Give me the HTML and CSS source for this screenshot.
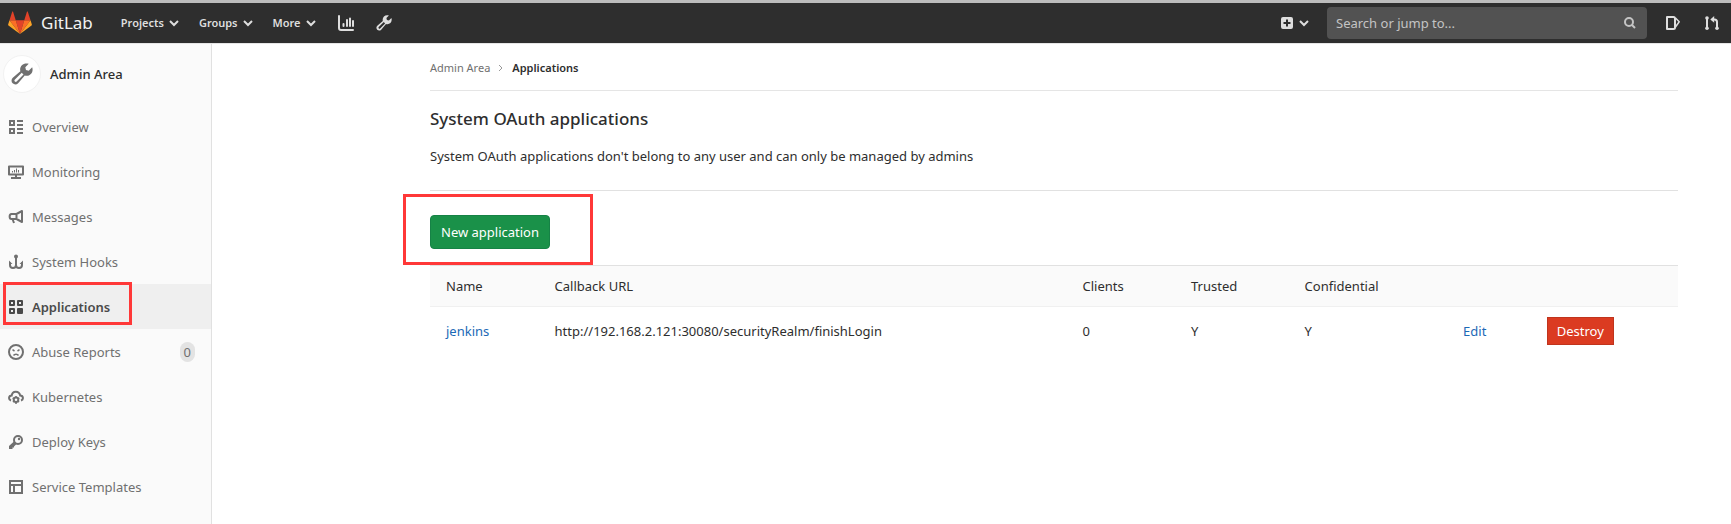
FILE: index.html
```html
<!DOCTYPE html>
<html lang="en">
<head>
<meta charset="utf-8">
<title>Applications · Admin Area · GitLab</title>
<link rel="stylesheet" href="styles.css">
</head>
<body>
<header class="navbar">
  <a class="brand" href="#">
    <svg class="logo" viewBox="0 0 36 36" aria-hidden="true">
      <path fill="#e24329" d="M18 34.4 24.4 14H11.6z"/>
      <path fill="#fc6d26" d="M18 34.4 11.6 14H2.2zM18 34.4 24.4 14h9.4z"/>
      <path fill="#fca326" d="M2.2 14 .2 20.3c-.2.6 0 1.2.5 1.5L18 34.4zM33.8 14l2 6.3c.2.6 0 1.2-.5 1.5L18 34.4z"/>
      <path fill="#e24329" d="M2.2 14h9.4L7.6 1.2c-.2-.6-1.1-.6-1.3 0zM33.8 14h-9.4l4-12.8c.2-.6 1.1-.6 1.3 0z"/>
    </svg>
    <span class="brand-name">GitLab</span>
  </a>
  <nav class="nav-left" aria-label="Primary">
    <button class="nav-btn" type="button">Projects <svg class="chev" viewBox="0 0 10 10"><path d="M1 3l4 4 4-4"/></svg></button>
    <button class="nav-btn" type="button">Groups <svg class="chev" viewBox="0 0 10 10"><path d="M1 3l4 4 4-4"/></svg></button>
    <button class="nav-btn" type="button">More <svg class="chev" viewBox="0 0 10 10"><path d="M1 3l4 4 4-4"/></svg></button>
    <a class="nav-icon" href="#" aria-label="Instance statistics"><svg class="icon" viewBox="0 0 16 16"><path fill="none" stroke="currentColor" stroke-width="2" stroke-linecap="round" d="M1 1v12c0 1.3.7 2 2 2h12"/><path fill="none" stroke="currentColor" stroke-width="2" stroke-linecap="round" d="M5.500 9v2M9 5v6M12 3.500V11M15 6v5"/></svg></a>
    <a class="nav-icon" href="#" aria-label="Admin Area"><svg class="icon" viewBox="0 0 16 16"><use href="#wrench"/></svg></a>
  </nav>
  <div class="nav-right">
    <button class="nav-btn new-btn" type="button" aria-label="New"><svg class="plus" viewBox="0 0 12 12"><path fill="currentColor" fill-rule="evenodd" d="M2 0h8a2 2 0 0 1 2 2v8a2 2 0 0 1-2 2H2a2 2 0 0 1-2-2V2a2 2 0 0 1 2-2zm3 2.500V5H2.500v2H5v2.500h2V7h2.500V5H7V2.500z"/></svg><svg class="chev" viewBox="0 0 10 10"><path d="M1 3l4 4 4-4"/></svg></button>
    <form class="search">
      <input type="text" placeholder="Search or jump to..." aria-label="Search or jump to">
      <svg class="search-icon" viewBox="0 0 12 12"><circle cx="5" cy="5" r="4" /><path d="M8 8l3 3"/></svg>
    </form>
    <a class="nav-icon" href="#" aria-label="Issues"><svg class="icon" viewBox="0 0 16 16"><path fill="none" stroke="currentColor" stroke-width="2" stroke-linejoin="round" d="M2 2h6.500c1 0 1.500.5 1.500 1.500v9c0 1-.5 1.500-1.500 1.500H2z"/><path fill="none" stroke="currentColor" stroke-width="1.500" stroke-linejoin="round" d="M10.500 3l3.700 3.800-3.700 5.200"/></svg></a>
    <a class="nav-icon" href="#" aria-label="Merge requests"><svg class="icon" viewBox="0 0 16 16"><path fill="none" stroke="currentColor" stroke-width="2" d="M3 3v10M9 4.500h1.500C12.300 4.500 13 5.500 13 7v6"/><path fill="currentColor" d="M10.200 1v6.800L6.300 4.400z"/><circle cx="3" cy="3" r="1.800" fill="currentColor"/><circle cx="3" cy="13.200" r="1.800" fill="currentColor"/><circle cx="13" cy="13.200" r="1.800" fill="currentColor"/></svg></a>
  </div>
</header>
<div class="layout">
  <aside class="sidebar">
    <a class="context" href="#">
      <span class="avatar"><svg class="wrench-lg" viewBox="0 0 16 16"><path id="wrench" fill="currentColor" fill-rule="evenodd" d="M12.900.6 10.400 3.100l.5 2 2 .5 2.500-2.500c1.300 3.800-1.800 7-5.400 6L5.200 14.700c-1.100 1.200-2.900 1.200-4 .1-1.100-1.100-1.100-2.900.1-4L6.800 6C5.900 2.200 9.200-.6 12.900.6zM7.800 7.100l-5.100 5a1 1 0 0 0 1.400 1.400l5-5.100z"/></svg></span>
      <span class="context-title">Admin Area</span>
    </a>
    <ul class="menu">
      <li><a href="#"><svg class="icon" viewBox="0 0 16 16"><path fill="none" stroke="currentColor" stroke-width="2" d="M2 2h4v4H2zM2 10h4v4H2zM9 2h6M9 6h6M9 10h6M9 14h6"/></svg>Overview</a></li>
      <li><a href="#"><svg class="icon" viewBox="0 0 16 16"><path fill="none" stroke="currentColor" stroke-width="2" stroke-linejoin="round" d="M1 2.500h14v8H1zM8 11v3M3 14h10"/><path fill="none" stroke="currentColor" d="M4.500 7v1.500M6.500 6v2.500M8.500 4.500v4M10.500 6v2.500"/></svg>Monitoring</a></li>
      <li><a href="#"><svg class="icon" viewBox="0 0 16 16"><path fill="none" stroke="currentColor" stroke-width="2" stroke-linejoin="round" d="M8.500 5 14 2v11L8.500 10H3.500C1 10 1 5 3.500 5zM8.500 5v5M4.500 10l1.500 4"/></svg>Messages</a></li>
      <li><a href="#"><svg class="icon" viewBox="0 0 16 16"><circle cx="8" cy="2.500" r="2" fill="currentColor"/><path fill="none" stroke="currentColor" stroke-width="2" d="M8 3v11M2 8.500V11c0 2 1.200 3 3 3s3-1 3-3M8 11c0 2 1.200 3 3 3s3-1 3-3V8.500"/><path fill="currentColor" d="M1 10V6.500L4.500 10zM11.500 10 15 6.500V10z"/></svg>System Hooks</a></li>
      <li class="active"><a href="#" aria-current="page"><svg class="icon" viewBox="0 0 16 16"><path fill="none" stroke="currentColor" stroke-width="2" stroke-linejoin="round" d="M2 2h4v4H2zM10 2h4v4h-4zM2 10h4v4H2z"/><path fill="currentColor" stroke="currentColor" stroke-width="2" stroke-linejoin="round" d="M10 10h4v4h-4z"/></svg>Applications</a></li>
      <li><a href="#"><svg class="icon" viewBox="0 0 16 16"><circle cx="8" cy="8" r="7" fill="none" stroke="currentColor" stroke-width="2"/><path fill="none" stroke="currentColor" stroke-width="1.500" d="M5.500 11.500c1-1.700 4-1.700 5 0M4.500 5.700l2 1.300M11.500 5.700l-2 1.300"/></svg>Abuse Reports<span class="badge">0</span></a></li>
      <li><a href="#"><svg class="icon" viewBox="0 0 16 16"><path fill="none" stroke="currentColor" stroke-width="2" d="M3 11.500C.2 10.500.500 6.700 3.700 6.500 4.300 1.700 11 1.300 12.200 6.500c3.300.2 3.600 4 .8 5"/><circle cx="8" cy="10.800" r="2.300" fill="none" stroke="currentColor" stroke-width="2"/><path stroke="currentColor" stroke-width="1.500" d="M8 7v1.500M8 13v2M4.700 9l1.500.8M11.300 9l-1.500.8M4.900 13l1.400-1M11.100 13l-1.400-1"/></svg>Kubernetes</a></li>
      <li><a href="#"><svg class="icon" viewBox="0 0 16 16"><circle cx="10" cy="6" r="4" fill="none" stroke="currentColor" stroke-width="2"/><circle cx="11" cy="5" r="1.200" fill="currentColor"/><path fill="currentColor" d="M6.200 7.200 8.800 9.800 6 12.500v1H4.500V15H1v-3z"/></svg>Deploy Keys</a></li>
      <li><a href="#"><svg class="icon" viewBox="0 0 16 16"><path fill="none" stroke="currentColor" stroke-width="2" d="M2 2h12v12H2zM2 6h12M6 6v8"/></svg>Service Templates</a></li>
      <li><a href="#" aria-label="Labels"><svg class="icon" viewBox="0 0 16 16"><path fill="none" stroke="currentColor" stroke-width="2" stroke-linejoin="round" d="M7.500 1H14v6.500L7 14.500 1 8z"/></svg></a></li>
    </ul>
    <span class="mark mark-menu"></span>
  </aside>
  <main class="content">
    <nav class="breadcrumbs" aria-label="Breadcrumb">
      <a href="#">Admin Area</a>
      <svg class="crumb-sep" viewBox="0 0 8 8"><path d="M2 1l3 3-3 3"/></svg>
      <a class="current" href="#">Applications</a>
    </nav>
    <h1 class="title">System OAuth applications</h1>
    <p class="lead">System OAuth applications don't belong to any user and can only be managed by admins</p>
    <hr class="rule">
    <div class="actions">
      <button class="btn-new" type="button">New application</button>
      <span class="mark mark-new"></span>
    </div>
    <table class="apps">
      <colgroup><col class="c-name"><col class="c-url"><col class="c-clients"><col class="c-trusted"><col class="c-conf"><col class="c-edit"><col></colgroup>
      <thead>
        <tr><th>Name</th><th>Callback URL</th><th>Clients</th><th>Trusted</th><th>Confidential</th><th></th><th></th></tr>
      </thead>
      <tbody>
        <tr><td><a href="#">jenkins</a></td><td>http://192.168.2.121:30080/securityRealm/finishLogin</td><td>0</td><td>Y</td><td>Y</td><td><a href="#">Edit</a></td><td><button class="btn-destroy" type="button">Destroy</button></td></tr>
      </tbody>
    </table>
  </main>
</div>
</body>
</html>
```
FILE: styles.css
```css
* { box-sizing: border-box; }
body {
  margin: 0;
  height: 100vh;
  overflow: hidden;
  display: flex;
  flex-direction: column;
  background: #fff;
  color: #2e2e2e;
  font: 13px/20px "Noto Sans", sans-serif;
}
a { color: #1b69b6; text-decoration: none; }
button, input { font: inherit; }
svg { display: block; flex: none; }
.icon { width: 16px; height: 16px; }

.navbar {
  flex: none;
  display: flex;
  align-items: center;
  height: 44px;
  padding: 0 11px 0 8px;
  background: #2e2e2e;
  border-top: 3px solid #bdbdbd;
  border-bottom: 1px solid #e5e5e5;
  color: #dedede;
}
.brand { display: flex; align-items: center; gap: 9px; color: #f2f2f2; }
.logo { width: 24px; height: 24px; }
.brand-name { font-size: 17px; }
.nav-left { display: flex; align-items: center; margin-left: 18px; }
.nav-btn {
  display: flex;
  align-items: center;
  gap: 5px;
  padding: 0 10px;
  border: 0;
  background: none;
  color: inherit;
  font-size: 11px;
  font-weight: 600;
}
.chev { width: 10px; height: 10px; }
.chev path { fill: none; stroke: currentColor; stroke-width: 2; }
.nav-icon { color: #dedede; }
.nav-left .nav-icon { margin-left: 12px; }
.nav-left .nav-icon + .nav-icon { margin-left: 22px; }
.nav-right { display: flex; align-items: center; margin-left: auto; }
.nav-right .nav-icon { margin-left: 18px; }
.nav-right .nav-icon + .nav-icon { margin-left: 23px; }
.new-btn { gap: 6px; margin-right: 8px; }
.plus { width: 12px; height: 12px; }
.search {
  position: relative;
  width: 320px;
}
.search input {
  display: block;
  width: 100%;
  height: 32px;
  padding: 0 36px 0 9px;
  border: 0;
  border-radius: 4px;
  background: #525252;
  color: #dedede;
}
.search input::placeholder { color: #c4c4c4; opacity: 1; }
.search-icon { position: absolute; top: 10px; right: 11px; width: 12px; height: 12px; }
.search-icon * { fill: none; stroke: #c4c4c4; stroke-width: 2; }

.layout { flex: 1; display: flex; min-height: 0; }
.sidebar {
  position: relative;
  flex: none;
  width: 212px;
  overflow: hidden;
  background: #fafafa;
  border-right: 1px solid #e1e1e1;
}
.context { display: flex; align-items: center; gap: 9px; height: 60px; padding: 0 3px; color: #2e2e2e; }
.avatar {
  display: flex;
  align-items: center;
  justify-content: center;
  width: 38px;
  height: 38px;
  border: 1px solid #f2f2f2;
  border-radius: 50%;
  background: #fff;
  color: #707070;
}
.wrench-lg { width: 22px; height: 22px; }
.context-title { font-weight: 500; }
.menu { margin: 0; padding: 0; list-style: none; }
.menu a { display: flex; align-items: center; gap: 8px; height: 45px; padding: 0 16px 0 8px; color: #707070; }
.menu .active a { background: #efefef; color: #4a4a4a; font-weight: 600; }
.badge { margin-left: auto; padding: 0 4px; border-radius: 10px; background: #e3e3e3; }

.content { flex: 1; min-width: 0; padding: 0 53px 0 218px; }
.breadcrumbs {
  display: flex;
  align-items: center;
  height: 47px;
  padding-top: 2px;
  border-bottom: 1px solid #e5e5e5;
  font-size: 11px;
}
.breadcrumbs a { color: #707070; }
.breadcrumbs .current { color: #2e2e2e; font-weight: 600; }
.crumb-sep { width: 8px; height: 8px; margin: 0 7px; }
.crumb-sep path { fill: none; stroke: #999; }
.title { margin: 16px 0 15px; font-size: 17px; line-height: 24px; font-weight: 500; }
.lead { margin: 0; }
.rule { margin: 24px 0; border: 0; border-top: 1px solid #e1e1e1; }
.actions { position: relative; padding-bottom: 16px; }
.btn-new {
  display: block;
  height: 34px;
  padding: 0 10px;
  border: 1px solid #168246;
  border-radius: 4px;
  background: #1a9149;
  color: #fff;
}
.apps { width: 100%; table-layout: fixed; border-collapse: collapse; }
.c-name, .c-clients { width: 8.7%; }
.c-url { width: 42.3%; }
.c-trusted { width: 9.1%; }
.c-conf { width: 12.7%; }
.c-edit { width: 6.7%; }
.apps th {
  height: 41px;
  padding: 0 16px;
  background: #fafafa;
  border-top: 1px solid #e1e1e1;
  border-bottom: 1px solid #f0f0f0;
  text-align: left;
  font-weight: 400;
}
.apps td { height: 49px; padding: 0 16px; white-space: nowrap; }
.btn-destroy {
  display: block;
  height: 28px;
  padding: 0 9px;
  border: 1px solid #c0341d;
  background: #db3b21;
  color: #fff;
}
.mark { position: absolute; border: 3px solid #ff3838; pointer-events: none; }
.mark-menu { left: 3px; top: 238px; width: 129px; height: 43px; }
.mark-new { left: -27px; top: -21px; width: 190px; height: 71px; }
```
